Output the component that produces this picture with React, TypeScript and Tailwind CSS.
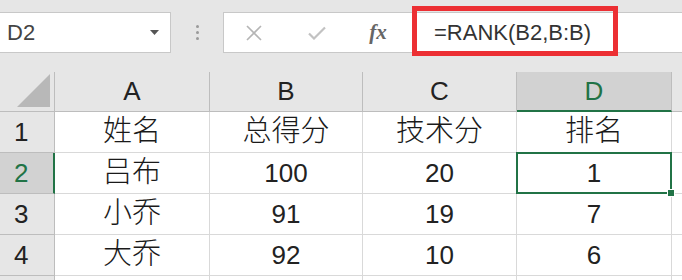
import React from "react";

const cn = '"Liberation Sans", "Noto Sans CJK SC", sans-serif';

const rows = [
  ["1", "姓名", "总得分", "技术分", "排名"],
  ["2", "吕布", "100", "20", "1"],
  ["3", "小乔", "91", "19", "7"],
  ["4", "大乔", "92", "10", "6"],
  ["", "", "", "", ""],
];

const isCjk = (s: string) => /[\u4e00-\u9fff]/.test(s);

export default function App() {
  return (
    <div className="w-[682px] h-[280px] overflow-hidden bg-[#e6e6e6]" style={{ fontFamily: cn }}>
      {/* formula bar */}
      <div className="h-[72px] pt-[12px] flex items-start">
        <div className="w-[171px] h-[41px] bg-white border border-l-0 border-[#c8c8c8] flex items-center pl-[7px] pr-[11px]">
          <span className="text-[22px] text-[#444] flex-1">D2</span>
          <svg width="9" height="5" viewBox="0 0 9 5"><path d="M0 0h9L4.5 5z" fill="#555" /></svg>
        </div>
        <div className="w-[52px] h-[41px] flex flex-col items-center justify-center gap-[3px]">
          <div className="w-[3px] h-[3px] rounded-full bg-[#9a9a9a]" />
          <div className="w-[3px] h-[3px] rounded-full bg-[#9a9a9a]" />
          <div className="w-[3px] h-[3px] rounded-full bg-[#9a9a9a]" />
        </div>
        <div className="flex-1 h-[41px] bg-white border border-r-0 border-[#c8c8c8] flex items-center relative">
          <div className="w-[60px] flex justify-center">
            <svg width="16" height="16" viewBox="0 0 16 16"><path d="M1 1L15 15M15 1L1 15" stroke="#b5b5b5" strokeWidth="1.6" /></svg>
          </div>
          <div className="w-[66px] flex justify-center">
            <svg width="18" height="14" viewBox="0 0 18 14"><path d="M1 7.5L6 12.5L17 1.5" stroke="#c2c2c2" strokeWidth="2.2" fill="none" /></svg>
          </div>
          <div className="w-[56px] flex justify-center">
            <span className="text-[21px] italic font-bold text-[#666]" style={{ fontFamily: '"Liberation Serif", serif' }}>fx</span>
          </div>
          <div className="absolute left-[188px] top-[-7px] w-[206px] h-[50px] border-[5px] border-[#ec2f33]" />
          <span className="ml-[28px] text-[22px] text-[#333]">=RANK(B2,B:B)</span>
        </div>
      </div>
      {/* grid */}
      <div className="grid grid-cols-[55px_155px_153px_154px_155px_10px] grid-rows-[40px_41px_41px_41px_41px_41px] bg-white">
        <div className="bg-[#e6e6e6] border-r border-b border-[#bdbdbd] flex items-end justify-end p-[4px]">
          <svg width="33" height="33" viewBox="0 0 33 33"><path d="M33 0V33H0z" fill="#b8b8b8" /></svg>
        </div>
        {["A", "B", "C"].map((c) => (
          <div key={c} className="bg-[#e6e6e6] border-r border-b border-[#bdbdbd] flex items-center justify-center text-[26px] text-[#222]">
            {c}
          </div>
        ))}
        <div className="bg-[#d2d2d2] border-r border-[#bdbdbd] border-b-2 border-b-[#217346] flex items-center justify-center text-[26px] text-[#217346]">
          D
        </div>
        <div className="bg-[#e6e6e6] border-b border-[#bdbdbd]" />
        {rows.map((r, ri) => (
          <React.Fragment key={ri}>
            <div
              className={
                ri === 1
                  ? "bg-[#d2d2d2] border-b border-[#bdbdbd] border-r-2 border-r-[#217346] flex items-center pl-[14px] text-[26px] text-[#217346]"
                  : "bg-[#e6e6e6] border-r border-b border-[#bdbdbd] flex items-center pl-[14px] text-[26px] text-[#222]"
              }
            >
              {r[0]}
            </div>
            {r.slice(1).map((v, ci) =>
              ri === 1 && ci === 3 ? (
                <div key={ci} className="relative border-2 border-[#217346] -ml-[1px] -mt-[1px] flex items-center justify-center text-[26px] text-[#222]">
                  {v}
                  <div className="absolute right-[-5px] bottom-[-5px] w-[8px] h-[8px] bg-[#217346] border border-white" />
                </div>
              ) : (
                <div
                  key={ci}
                  className={
                    isCjk(v)
                      ? "border-r border-b border-[#d9d9d9] flex items-center justify-center text-[29px] font-light text-[#1a1a1a]"
                      : "border-r border-b border-[#d9d9d9] flex items-center justify-center text-[26px] text-[#222]"
                  }
                >
                  {v}
                </div>
              )
            )}
            <div className="border-b border-[#d9d9d9]" />
          </React.Fragment>
        ))}
      </div>
    </div>
  );
}
